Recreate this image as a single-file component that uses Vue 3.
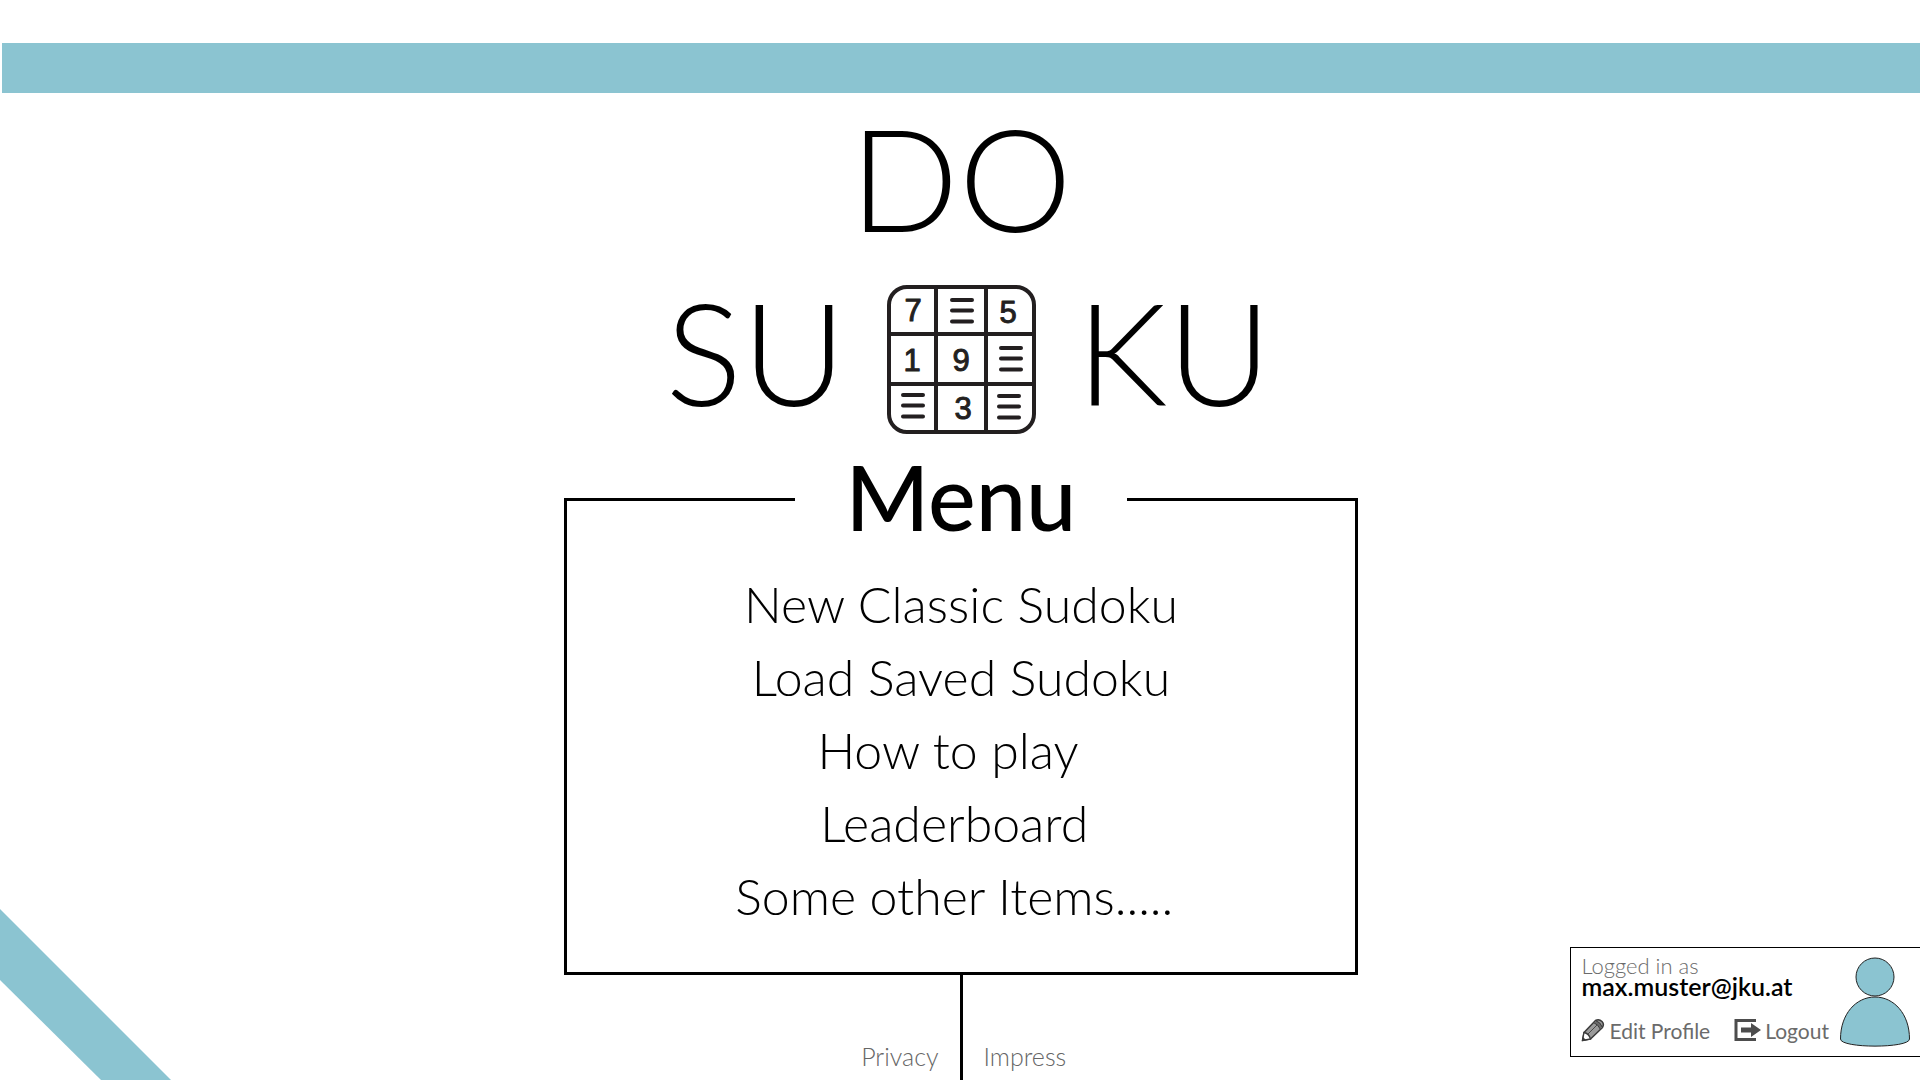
<script setup>
const menuItems = [
  'New Classic Sudoku',
  'Load Saved Sudoku',
  'How to play\u00a0\u00a0',
  'Leaderboard\u00a0',
  'Some other Items.....\u00a0',
]

const digits = [
  { value: '7', x: 26, y: 36 },
  { value: '5', x: 121, y: 38 },
  { value: '1', x: 25, y: 86 },
  { value: '9', x: 74, y: 86 },
  { value: '3', x: 76, y: 134 },
]

const stripes = [
  { x: 65, y: 15 },
  { x: 114, y: 63 },
  { x: 16, y: 110 },
  { x: 112, y: 111 },
]
</script>

<template>
  <div class="page">
    <header class="bar"></header>

    <main class="content">
      <h1 class="logo">
        <span>DO</span>
        <span class="logo-row">
          <span class="logo-part start">SU</span>
          <svg class="tile" viewBox="0 0 149 149" aria-hidden="true">
            <g fill="none" stroke="#231f20" stroke-width="4">
              <rect x="2" y="2" width="145" height="145" rx="18" />
              <path d="M49 2V147M99 2V147M2 49H147M2 99H147" />
            </g>
            <g fill="none" stroke="#231f20" stroke-width="4" stroke-linecap="round">
              <path
                v-for="s in stripes"
                :key="s.x + '-' + s.y"
                :d="`M${s.x} ${s.y}h20m-20 10.500h20m-20 11h20`"
              />
            </g>
            <text v-for="d in digits" :key="d.value" class="digit" :x="d.x" :y="d.y">{{ d.value }}</text>
          </svg>
          <span class="logo-part">KU</span>
        </span>
      </h1>

      <nav class="menu" aria-labelledby="menu-title">
        <div class="menu-head">
          <span class="rule"></span>
          <h2 id="menu-title">Menu</h2>
          <span class="rule"></span>
        </div>
        <ul class="menu-list">
          <li v-for="item in menuItems" :key="item"><a href="#">{{ item }}</a></li>
        </ul>
      </nav>
    </main>

    <footer class="footer">
      <a class="privacy" href="#">Privacy</a>
      <span class="stem"></span>
      <a class="impress" href="#">Impress</a>
    </footer>

    <svg class="ribbon" viewBox="0 0 171 171" aria-hidden="true">
      <path d="M0 0L171 171H101L0 71Z" fill="#8bc4d1" />
    </svg>

    <aside class="account">
      <div class="account-info">
        <span class="label">Logged in as</span>
        <strong class="email">max.muster@jku.at</strong>
        <div class="actions">
          <button type="button">
            <svg class="pencil" viewBox="0 0 24 24" aria-hidden="true">
              <path d="M1.500 22.500L3 14.500L14.500 2.500Q18 .5 21 3.500Q23.500 6 21.500 9.500L9.500 21Z" fill="#9a9a9a" stroke="#3a3a3a" stroke-width="1.500" stroke-linejoin="round" />
              <path d="M14.500 2.500Q19.500 4 21.500 9.500L19.500 11.500Q17.500 6.500 12.500 4.500Z" fill="#6a6a6a" stroke="#3a3a3a" />
              <path d="M6.500 16.500L16 7" stroke="#4a4a4a" stroke-width="1" fill="none" />
              <path d="M1.500 22.500L3 14.500Q8 15.500 9.500 21Z" fill="#fff" stroke="#3a3a3a" stroke-width="1.300" />
              <path d="M1 23L2 19L5 22Z" fill="#3a3a3a" />
            </svg>
            Edit Profile
          </button>
          <button type="button">
            <svg class="exit" viewBox="0 0 27 24" aria-hidden="true">
              <path d="M22 2.500H2V21.500H22" fill="none" stroke="#4d4d4d" stroke-width="3" />
              <path d="M7 9.500H17V5L27 12L17 19V14.500H7Z" fill="#4d4d4d" />
            </svg>
            Logout
          </button>
        </div>
      </div>
      <svg class="avatar" viewBox="0 0 72 92" aria-hidden="true">
        <g fill="#8bc4d1" stroke="#222" stroke-width="1">
          <circle cx="36" cy="21" r="19" />
          <path d="M1.500 83C1.500 58 17 41 36 41S70.500 58 70.500 83C70.500 92.500 1.500 92.500 1.500 83Z" />
        </g>
      </svg>
    </aside>
  </div>
</template>

<style>
body {
  margin: 0;
  background: #fff;
}
</style>

<style scoped>
.page {
  position: relative;
  display: flex;
  flex-direction: column;
  min-height: 100vh;
  overflow: hidden;
  font-family: Lato, "Open Sans", sans-serif;
  color: #000;
}
a {
  color: inherit;
  text-decoration: none;
}
.bar {
  height: 50px;
  margin: 43px 0 0 2px;
  background: #8bc4d1;
}
.content {
  display: flex;
  flex-direction: column;
  align-items: center;
  padding-left: 2px;
}
.logo {
  display: flex;
  flex-direction: column;
  align-items: center;
  gap: 6px;
  margin: 0;
  font-size: 143px;
  font-weight: 300;
  line-height: 168px;
}
.logo-row {
  display: flex;
  align-items: center;
  gap: 41px;
}
.logo-part {
  width: 180px;
}
.logo-part.start {
  text-align: right;
}
.tile {
  width: 149px;
  height: 149px;
  margin-top: 16px;
}
.digit {
  font-family: "Liberation Sans", sans-serif;
  font-size: 31px;
  line-height: 31px;
  text-anchor: middle;
  fill: #231f20;
  stroke: #231f20;
  stroke-width: 1px;
  stroke-linejoin: round;
}
.menu {
  width: 794px;
  max-width: 100%;
  margin-top: 13px;
}
.menu-head {
  display: flex;
}
.menu-head h2 {
  width: 332px;
  margin: 0;
  padding-bottom: 4px;
  font-size: 90px;
  font-weight: 500;
  line-height: 96px;
  text-align: center;
}
.rule {
  flex: 1;
  align-self: flex-end;
  height: 50px;
  box-sizing: border-box;
  border-top: 3px solid #000;
}
.rule:first-child {
  border-left: 3px solid #000;
}
.rule:last-child {
  border-right: 3px solid #000;
}
.menu-list {
  margin: 0;
  padding: 20px 0 39px;
  border: 3px solid #000;
  border-top: 0;
  list-style: none;
  font-size: 50px;
  font-weight: 300;
  line-height: 73px;
  text-align: center;
}
.menu-list a {
  white-space: pre;
}
.footer {
  display: grid;
  grid-template-columns: 1fr 3px 1fr;
  flex: 1;
  align-items: end;
  column-gap: 21px;
  padding-left: 2px;
  font-size: 25px;
  font-weight: 300;
  line-height: 28px;
  color: #666;
}
.footer a {
  padding-bottom: 10px;
}
.privacy {
  text-align: right;
}
.stem {
  align-self: stretch;
  background: #000;
}
.ribbon {
  position: absolute;
  left: 0;
  bottom: 0;
  width: 171px;
  height: 171px;
}
.account {
  position: absolute;
  right: 0;
  bottom: 23px;
  display: flex;
  align-items: center;
  gap: 10px;
  box-sizing: border-box;
  height: 110px;
  padding: 0 9px 0 10px;
  border: 1px solid #000;
  border-right: 0;
  background: #fff;
}
.account-info {
  display: flex;
  flex-direction: column;
  margin-bottom: 7px;
  font-size: 21px;
  line-height: 21px;
  color: #6b6b6b;
}
.label {
  font-size: 22px;
  font-weight: 300;
}
.email {
  color: #000;
  font-size: 25px;
  font-weight: 600;
}
.actions {
  display: flex;
  gap: 24px;
  margin-top: 21px;
}
.actions button {
  display: flex;
  align-items: center;
  gap: 4px;
  padding: 0;
  border: 0;
  background: none;
  font: inherit;
  color: inherit;
  cursor: pointer;
}
.pencil {
  width: 24px;
  height: 24px;
}
.exit {
  width: 27px;
  height: 24px;
}
.avatar {
  width: 72px;
  height: 92px;
}
</style>
